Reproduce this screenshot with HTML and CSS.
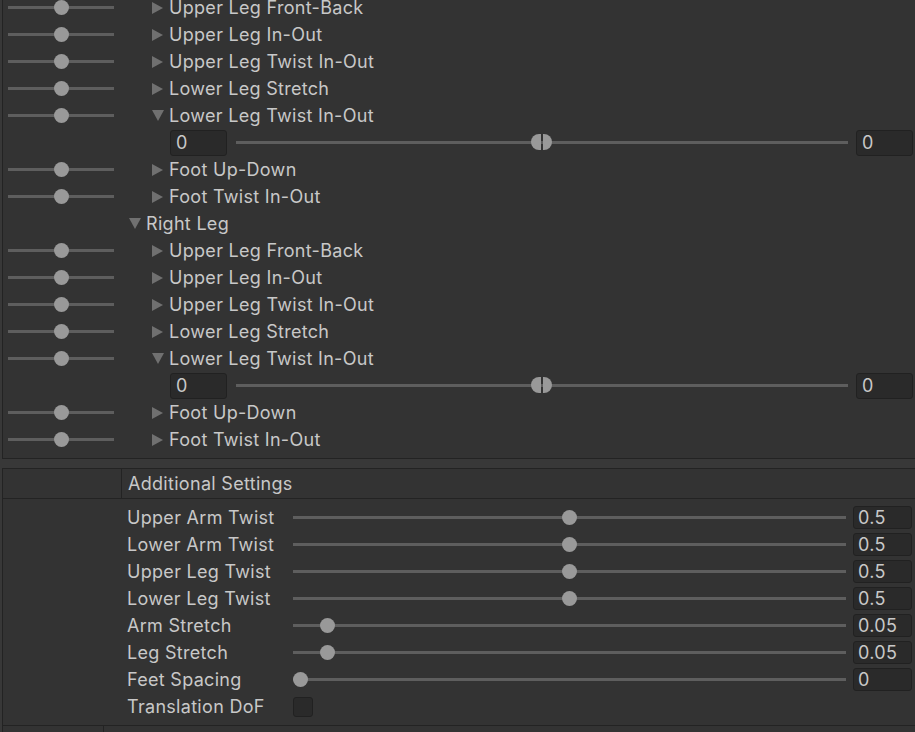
FILE: index.html
```html
<!DOCTYPE html>
<html>
<head>
<meta charset="utf-8">
<link rel="stylesheet" href="styles.css">
</head>
<body>
<div class="page">
  <div class="muscles">
    <div class="row"><div class="mini"><div class="mini-track"><span class="knob"></span></div></div><div class="label l2"><span class="tri right"></span>Upper Leg Front-Back</div></div>
    <div class="row"><div class="mini"><div class="mini-track"><span class="knob"></span></div></div><div class="label l2"><span class="tri right"></span>Upper Leg In-Out</div></div>
    <div class="row"><div class="mini"><div class="mini-track"><span class="knob"></span></div></div><div class="label l2"><span class="tri right"></span>Upper Leg Twist In-Out</div></div>
    <div class="row"><div class="mini"><div class="mini-track"><span class="knob"></span></div></div><div class="label l2"><span class="tri right"></span>Lower Leg Stretch</div></div>
    <div class="row"><div class="mini"><div class="mini-track"><span class="knob"></span></div></div><div class="label l2"><span class="tri down"></span>Lower Leg Twist In-Out</div></div>
    <div class="row range"><div class="mini"></div><div class="field big">0</div><div class="track"><span class="split"><i></i><i></i></span></div><div class="field big">0</div></div>
    <div class="row"><div class="mini"><div class="mini-track"><span class="knob"></span></div></div><div class="label l2"><span class="tri right"></span>Foot Up-Down</div></div>
    <div class="row"><div class="mini"><div class="mini-track"><span class="knob"></span></div></div><div class="label l2"><span class="tri right"></span>Foot Twist In-Out</div></div>
    <div class="row"><div class="mini"></div><div class="label l1"><span class="tri down"></span>Right Leg</div></div>
    <div class="row"><div class="mini"><div class="mini-track"><span class="knob"></span></div></div><div class="label l2"><span class="tri right"></span>Upper Leg Front-Back</div></div>
    <div class="row"><div class="mini"><div class="mini-track"><span class="knob"></span></div></div><div class="label l2"><span class="tri right"></span>Upper Leg In-Out</div></div>
    <div class="row"><div class="mini"><div class="mini-track"><span class="knob"></span></div></div><div class="label l2"><span class="tri right"></span>Upper Leg Twist In-Out</div></div>
    <div class="row"><div class="mini"><div class="mini-track"><span class="knob"></span></div></div><div class="label l2"><span class="tri right"></span>Lower Leg Stretch</div></div>
    <div class="row"><div class="mini"><div class="mini-track"><span class="knob"></span></div></div><div class="label l2"><span class="tri down"></span>Lower Leg Twist In-Out</div></div>
    <div class="row range"><div class="mini"></div><div class="field big">0</div><div class="track"><span class="split"><i></i><i></i></span></div><div class="field big">0</div></div>
    <div class="row"><div class="mini"><div class="mini-track"><span class="knob"></span></div></div><div class="label l2"><span class="tri right"></span>Foot Up-Down</div></div>
    <div class="row"><div class="mini"><div class="mini-track"><span class="knob"></span></div></div><div class="label l2"><span class="tri right"></span>Foot Twist In-Out</div></div>
  </div>

  <div class="settings">
    <div class="settings-head"><div class="head-cell"></div><div class="head-title">Additional Settings</div></div>
    <div class="settings-body">
      <div class="srow"><div class="slabel">Upper Arm Twist</div><div class="strack"><span class="sknob" style="left: calc((100% - 15px) * 0.5)"></span></div><div class="field small">0.5</div></div>
      <div class="srow"><div class="slabel">Lower Arm Twist</div><div class="strack"><span class="sknob" style="left: calc((100% - 15px) * 0.5)"></span></div><div class="field small">0.5</div></div>
      <div class="srow"><div class="slabel">Upper Leg Twist</div><div class="strack"><span class="sknob" style="left: calc((100% - 15px) * 0.5)"></span></div><div class="field small">0.5</div></div>
      <div class="srow"><div class="slabel">Lower Leg Twist</div><div class="strack"><span class="sknob" style="left: calc((100% - 15px) * 0.5)"></span></div><div class="field small">0.5</div></div>
      <div class="srow"><div class="slabel">Arm Stretch</div><div class="strack"><span class="sknob" style="left: calc((100% - 15px) * 0.05)"></span></div><div class="field small">0.05</div></div>
      <div class="srow"><div class="slabel">Leg Stretch</div><div class="strack"><span class="sknob" style="left: calc((100% - 15px) * 0.05)"></span></div><div class="field small">0.05</div></div>
      <div class="srow"><div class="slabel">Feet Spacing</div><div class="strack"><span class="sknob" style="left: 0"></span></div><div class="field small">0</div></div>
      <div class="srow"><div class="slabel">Translation DoF</div><div class="checkbox"></div></div>
    </div>
    <div class="next"><div class="next-cell"></div></div>
  </div>
</div>
</body>
</html>
```

FILE: styles.css
```css
html, body {
  margin: 0;
  padding: 0;
  background: #383838;
  overflow: hidden;
}
body {
  width: 915px;
  height: 732px;
  font-family: Inter, "Noto Sans", sans-serif;
  font-size: 18px;
  color: #c8c8c8;
}
.page {
  margin-top: -6px;
  padding-left: 2px;
}
.muscles {
  background: #333333;
  border-left: 1px solid #232323;
  border-bottom: 1px solid #232323;
  padding-bottom: 5px;
}
.row {
  height: 27px;
  display: flex;
  align-items: center;
}
.mini {
  width: 118px;
  flex: none;
  display: flex;
  align-items: center;
}
.mini-track {
  margin-left: 5px;
  width: 106px;
  height: 3px;
  background: #5e5e5e;
  position: relative;
}
.knob {
  position: absolute;
  left: 46px;
  top: -6px;
  width: 15px;
  height: 15px;
  border-radius: 50%;
  background: #999999;
}
.label {
  display: flex;
  align-items: center;
  white-space: nowrap;
  letter-spacing: 0.3px;
}
.label.l1 { padding-left: 8px; }
.label.l2 { padding-left: 31px; }
.tri {
  width: 0;
  height: 0;
  margin-right: 6px;
}
.tri.right {
  border-left: 11px solid #707070;
  border-top: 6.5px solid transparent;
  border-bottom: 6.5px solid transparent;
}
.tri.down {
  border-top: 11px solid #707070;
  border-left: 6px solid transparent;
  border-right: 6px solid transparent;
  margin-right: 5px;
}
.range {
  padding-right: 2px;
}
.range .mini + .field {
  margin-left: 49px;
}
.field {
  flex: none;
  box-sizing: border-box;
  background: #2a2a2a;
  border: 1px solid #212121;
  border-radius: 3px;
  display: flex;
  align-items: center;
  letter-spacing: 0.3px;
}
.field.big {
  width: 57px;
  height: 26px;
  padding-left: 5px;
}
.track {
  flex: 1;
  margin: 0 8px 0 9px;
  height: 3px;
  background: #5e5e5e;
  position: relative;
}
.split {
  position: absolute;
  left: 50%;
  top: -7px;
  margin-left: -11px;
  width: 21px;
  height: 16px;
  display: flex;
  gap: 2px;
}
.split i {
  flex: 1;
  background: #999999;
  border-radius: 8px 0 0 8px;
}
.split i + i {
  border-radius: 0 8px 8px 0;
}
.settings {
  margin-top: 9px;
  background: #333333;
  border-left: 1px solid #232323;
}
.settings-head {
  display: flex;
  height: 29px;
  border-top: 1px solid #232323;
  border-bottom: 1px solid #232323;
}
.head-cell {
  width: 118px;
  border-right: 1px solid #232323;
  flex: none;
}
.head-title {
  padding-left: 6px;
  display: flex;
  align-items: center;
  letter-spacing: 0.3px;
}
.settings-body {
  padding: 5px 3px 5px 0;
  border-bottom: 1px solid #232323;
}
.srow {
  height: 27px;
  display: flex;
  align-items: center;
}
.slabel {
  width: 166px;
  flex: none;
  padding-left: 124px;
  white-space: nowrap;
  letter-spacing: 0.3px;
}
.strack {
  flex: 1;
  height: 3px;
  background: #5e5e5e;
  position: relative;
  margin-right: 7px;
}
.sknob {
  position: absolute;
  top: -6px;
  width: 15px;
  height: 15px;
  border-radius: 50%;
  background: #999999;
}
.field.small {
  width: 59px;
  height: 23px;
  padding-left: 4px;
}
.checkbox {
  width: 20px;
  height: 20px;
  box-sizing: border-box;
  background: #2a2a2a;
  border: 1px solid #212121;
  border-radius: 3px;
}
.next {
  height: 20px;
  display: flex;
}
.next-cell {
  width: 100px;
  border-right: 1px solid #232323;
}
```
